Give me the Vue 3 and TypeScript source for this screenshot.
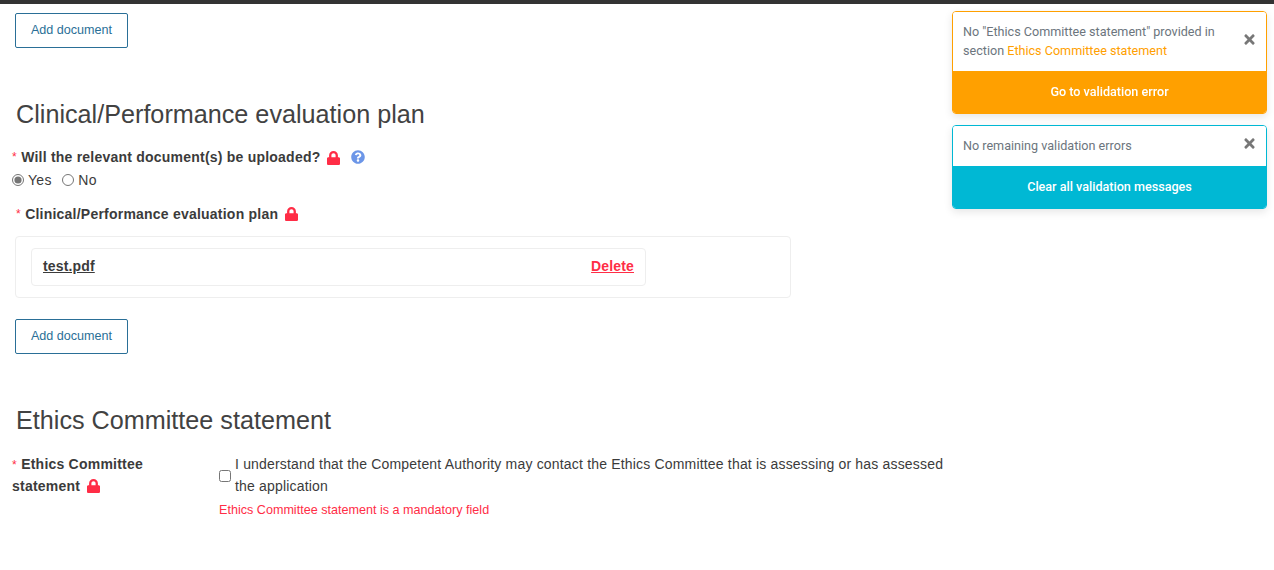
<template>
  <div class="topbar"></div>
  <main class="page">
    <button class="btn-add first" type="button">Add document</button>

    <h2 class="section-title plan-title">Clinical/Performance evaluation plan</h2>

    <div class="label-row">
      <span class="req">*</span>
      <span class="label">Will the relevant document(s) be uploaded?</span>
      <svg class="lock" viewBox="0 0 448 512" preserveAspectRatio="none"><path :d="lockPath" /></svg>
      <svg class="help" viewBox="0 0 512 512"><path :d="helpPath" /></svg>
    </div>
    <div class="radios">
      <label class="radio"><input type="radio" name="upload" checked /> Yes</label>
      <label class="radio"><input type="radio" name="upload" /> No</label>
    </div>

    <div class="label-row sub">
      <span class="req">*</span>
      <span class="label">Clinical/Performance evaluation plan</span>
      <svg class="lock" viewBox="0 0 448 512" preserveAspectRatio="none"><path :d="lockPath" /></svg>
    </div>

    <div class="doc-box">
      <div class="doc-row">
        <a class="doc-name" href="#">test.pdf</a>
        <a class="doc-delete" href="#">Delete</a>
      </div>
    </div>

    <button class="btn-add" type="button">Add document</button>

    <h2 class="section-title ethics-title">Ethics Committee statement</h2>

    <div class="ethics-row">
      <div class="ethics-label">
        <span class="req">*</span>
        <span class="label">Ethics Committee statement</span>
        <svg class="lock" viewBox="0 0 448 512" preserveAspectRatio="none"><path :d="lockPath" /></svg>
      </div>
      <div class="ethics-field">
        <label class="check">
          <input type="checkbox" />
          <span>I understand that the Competent Authority may contact the Ethics Committee that is assessing or has assessed the application</span>
        </label>
        <div class="error">Ethics Committee statement is a mandatory field</div>
      </div>
    </div>
  </main>

  <aside class="toasts">
    <div v-for="t in toasts" :key="t.action" class="toast" :class="t.kind">
      <div class="toast-body">
        <p>{{ t.text }}<span v-if="t.link" class="toast-link">{{ t.link }}</span></p>
        <svg class="close" viewBox="0 0 352 512"><path :d="closePath" /></svg>
      </div>
      <div class="toast-action">{{ t.action }}</div>
    </div>
  </aside>
</template>

<script setup lang="ts">
const lockPath = 'M400 224h-24v-72C376 68.2 307.8 0 224 0S72 68.2 72 152v72H48c-26.5 0-48 21.5-48 48v192c0 26.5 21.5 48 48 48h352c26.5 0 48-21.5 48-48V272c0-26.5-21.5-48-48-48zm-104 0H152v-72c0-39.7 32.3-72 72-72s72 32.3 72 72v72z'
const helpPath = 'M504 256c0 137-111 248-248 248S8 393 8 256C8 119.100 119 8 256 8s248 111 248 248zM262.700 90c-54.500 0-89.300 23-116.500 63.800-3.500 5.300-2.400 12.400 2.700 16.300l34.700 26.300c5.200 3.900 12.600 3 16.700-2.100 17.900-22.700 30.100-35.800 57.300-35.800 20.400 0 45.700 13.100 45.700 32.900 0 15-12.400 22.700-32.500 34C247.100 238.500 216 254.900 216 296v4c0 6.600 5.400 12 12 12h56c6.600 0 12-5.400 12-12v-1.300c0-28.500 83.200-29.700 83.200-106.700 0-58-60.200-102-116.500-102zM256 338c-25.400 0-46 20.600-46 46 0 25.400 20.600 46 46 46s46-20.600 46-46c0-25.400-20.600-46-46-46z'
const closePath = 'M242.720 256l100.070-100.070c12.280-12.280 12.280-32.190 0-44.480l-22.240-22.240c-12.280-12.280-32.190-12.280-44.480 0L176 189.280 75.930 89.210c-12.280-12.280-32.190-12.280-44.480 0L9.210 111.450c-12.280 12.280-12.280 32.190 0 44.480L109.280 256 9.210 356.070c-12.280 12.280-12.280 32.190 0 44.480l22.240 22.240c12.280 12.280 32.200 12.280 44.480 0L176 322.720l100.070 100.070c12.280 12.280 32.200 12.280 44.480 0l22.240-22.240c12.280-12.280 12.280-32.190 0-44.480L242.720 256z'

const toasts = [
  {
    kind: 'warn',
    text: 'No "Ethics Committee statement" provided in section ',
    link: 'Ethics Committee statement',
    action: 'Go to validation error',
  },
  {
    kind: 'info',
    text: 'No remaining validation errors',
    link: '',
    action: 'Clear all validation messages',
  },
]
</script>

<style>
html, body {
  background: #fff;
}
</style>

<style scoped>
.topbar {
  height: 4px;
  background: #333;
}

.page {
  width: 960px;
  padding: 9px 0 0 12px;
  box-sizing: border-box;
  font-family: "Liberation Sans", Arial, sans-serif;
  font-size: 14px;
  color: #3b3b3b;
}

.btn-add {
  display: block;
  width: 113px;
  height: 35px;
  margin-left: 3px;
  padding: 0 0 2px;
  background: #fff;
  border: 1px solid #2a6f97;
  border-radius: 2px;
  color: #2a6f97;
  font: 12.6px "Liberation Sans", Arial, sans-serif;
}

.section-title {
  margin: 0 0 0 4px;
  font-size: 25.2px;
  font-weight: 400;
  line-height: 32px;
  color: #424242;
}

.plan-title {
  margin-top: 50px;
}

.ethics-title {
  margin-top: 50px;
}

.label-row {
  display: flex;
  align-items: center;
  height: 22px;
  margin-top: 17px;
}

.label-row.sub {
  margin: 12px 0 0 4px;
}

.label-row .req,
.label-row .label {
  padding-bottom: 2px;
}

.label-row.sub .req,
.label-row.sub .label {
  padding-bottom: 0;
}

.req {
  color: #ff2d46;
  font-size: 12px;
  margin-right: 4.5px;
}

.label {
  font-weight: 700;
  font-size: 14px;
  letter-spacing: 0.22px;
}

.lock {
  width: 13px;
  height: 14px;
  margin-left: 7px;
  fill: #ff2d46;
  flex: none;
}

.help {
  width: 14px;
  height: 14px;
  margin-left: 11px;
  margin-top: -3px;
  fill: #6c96e8;
  flex: none;
}

.radios {
  display: flex;
  gap: 10.5px;
  height: 22px;
  align-items: center;
}

.radio {
  display: flex;
  align-items: center;
  gap: 4px;
  letter-spacing: 0.3px;
}

.radio input {
  width: 12px;
  height: 12px;
  margin: 0;
  accent-color: #757575;
}

.doc-box {
  width: 776px;
  height: 62px;
  margin: 11px 0 21px 3px;
  padding: 11px 15px;
  box-sizing: border-box;
  border: 1px solid #eeeeee;
  border-radius: 4px;
}

.doc-row {
  display: flex;
  justify-content: space-between;
  align-items: center;
  width: 615px;
  height: 38px;
  padding: 0 11px 2px;
  box-sizing: border-box;
  border: 1px solid #eeeeee;
  border-radius: 4px;
  font-size: 14px;
  font-weight: 700;
  letter-spacing: 0.15px;
}

.doc-name {
  color: #3b3b3b;
}

.doc-delete {
  color: #ff2d46;
}

.ethics-row {
  display: flex;
  margin-top: 17px;
}

.ethics-label {
  width: 207px;
  padding-right: 20px;
  box-sizing: border-box;
  flex: none;
  line-height: 22px;
}

.ethics-label .req {
  line-height: 1;
}

.ethics-label .lock {
  vertical-align: -2px;
}

.ethics-field {
  width: 735px;
  flex: none;
}

.check {
  display: flex;
  align-items: center;
  gap: 4px;
  line-height: 22px;
  letter-spacing: 0.18px;
}

.check input {
  width: 12px;
  height: 12px;
  margin: 1px 0 0;
  flex: none;
}

.error {
  margin-top: 4px;
  font-size: 12.6px;
  line-height: 18px;
  color: #ff2d46;
}

.toasts {
  position: fixed;
  top: 11px;
  left: 952px;
  width: 315px;
  display: flex;
  flex-direction: column;
  gap: 11px;
  font-family: Roboto, "Liberation Sans", sans-serif;
  font-size: 12.6px;
}

.toast {
  border-radius: 4px;
  box-shadow: 0 3px 8px rgba(0, 0, 0, 0.1);
  overflow: hidden;
  border: 1px solid;
  box-sizing: border-box;
}

.toast.warn {
  border-color: #ffa000;
}

.toast.info {
  border-color: #00b8d4;
}

.toast-body {
  display: flex;
  justify-content: space-between;
  align-items: center;
  padding: 10px 11px 11px 10px;
  line-height: 19px;
  color: #6c757d;
  background: #fff;
}

.toast-body p {
  margin: 0;
  width: 270px;
}

.toast-link {
  color: #ffa000;
}

.close {
  width: 11px;
  height: 15px;
  margin-bottom: 4px;
  fill: #777;
  flex: none;
}

.toast-action {
  height: 42px;
  line-height: 42px;
  text-align: center;
  color: #fff;
  font-weight: 500;
}

.warn .toast-action {
  background: #ffa000;
}

.info .toast-action {
  background: #00b8d4;
}
</style>
